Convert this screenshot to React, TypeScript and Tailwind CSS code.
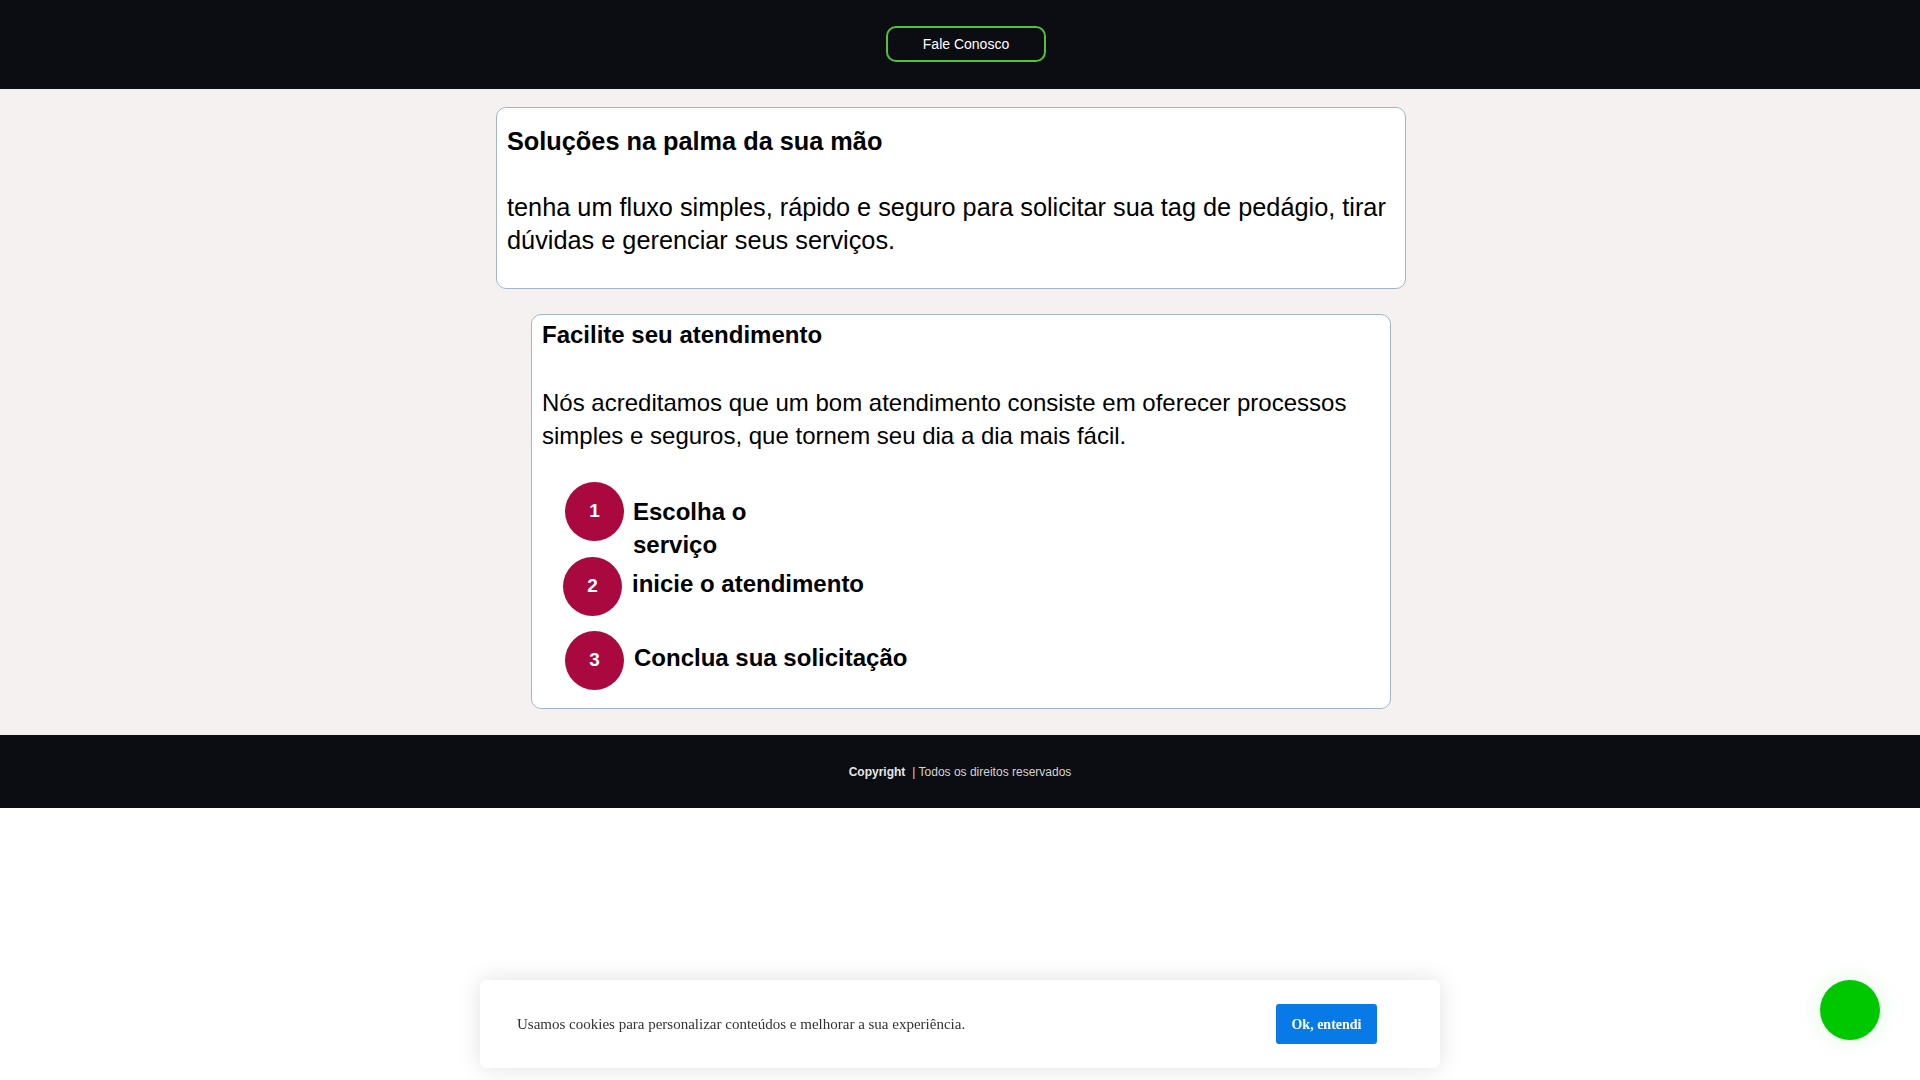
/**
 * App - página de atendimento (tag de pedágio)
 */

const steps = [
  { n: 1, label: 'Escolha o serviço' },
  { n: 2, label: 'inicie o atendimento' },
  { n: 3, label: 'Conclua sua solicitação' },
];

function StepBadge({ n, className = '' }: { n: number; className?: string }) {
  return (
    <div
      className={`w-[59px] h-[59px] shrink-0 rounded-full bg-[#a9093f] text-white text-[19px] font-bold flex items-center justify-center ${className}`}
    >
      {n}
    </div>
  );
}

export default function App() {
  return (
    <div className="min-h-screen bg-white text-black font-['Liberation_Sans',Arial,sans-serif]">
      {/* Header */}
      <header className="h-[89px] bg-[#0b0d12] flex justify-center pt-[26px]">
        <button className="ml-[12px] w-[160px] h-[36px] rounded-[10px] border-2 border-[#4fc33a] text-white text-[14px]">
          Fale Conosco
        </button>
      </header>

      {/* Main */}
      <main className="h-[646px] bg-[#f4f1f0] flex flex-col items-center pt-[18px]">
        <section className="w-[910px] mr-[18px] bg-white border border-[#a3b5c8] rounded-[10px] px-[10px] pt-[19px] pb-[31px]">
          <h2 className="text-[25.3px] leading-[28px] font-bold">Soluções na palma da sua mão</h2>
          <p className="mt-[36px] text-[25.3px] leading-[33px]">
            tenha um fluxo simples, rápido e seguro para solicitar sua tag de pedágio, tirar dúvidas e gerenciar
            seus serviços.
          </p>
        </section>

        <section className="w-[860px] ml-[2px] mt-[25px] bg-white border border-[#a3b5c8] rounded-[10px] px-[10px] pt-[6px] pb-[18px]">
          <h2 className="text-[24px] leading-[28px] font-bold">Facilite seu atendimento</h2>
          <p className="mt-[37px] text-[24px] leading-[33px] pr-[20px]">
            Nós acreditamos que um bom atendimento consiste em oferecer processos simples e seguros, que tornem seu
            dia a dia mais fácil.
          </p>

          <div className="mt-[30px] flex flex-col gap-[14px]">
            {/* Step 1 */}
            <div className="h-[60px] flex items-start ml-[23px]">
              <StepBadge n={steps[0].n} />
              <span className="ml-[9px] mt-[13px] w-[150px] text-[24px] leading-[33px] font-bold">
                {steps[0].label}
              </span>
            </div>
            {/* Step 2 */}
            <div className="h-[60px] flex items-center ml-[21px]">
              <StepBadge n={steps[1].n} />
              <span className="ml-[10px] mb-[5px] text-[24px] leading-[33px] font-bold">{steps[1].label}</span>
            </div>
            {/* Step 3 */}
            <div className="h-[60px] flex items-center ml-[23px]">
              <StepBadge n={steps[2].n} />
              <span className="ml-[10px] mb-[5px] text-[24px] leading-[33px] font-bold">{steps[2].label}</span>
            </div>
          </div>
        </section>
      </main>

      {/* Footer */}
      <footer className="h-[73px] bg-[#0b0d12] flex items-center justify-center text-[12px] text-[#d4d4d4]">
        <strong className="text-[#e6e6e6]">Copyright</strong>
        <span className="ml-[7px]">| Todos os direitos reservados</span>
      </footer>

      {/* Cookie banner */}
      <div className="fixed bottom-[12px] left-1/2 -translate-x-1/2 w-[960px] h-[88px] bg-white rounded-[6px] shadow-[0_0_24px_rgba(0,0,0,0.12)] flex items-center justify-between pl-[37px] pr-[63px] font-['Liberation_Serif','Times_New_Roman',serif]">
        <span className="text-[15px] text-[#333]">
          Usamos cookies para personalizar conteúdos e melhorar a sua experiência.
        </span>
        <button className="w-[101px] h-[40px] rounded-[3px] bg-[#087ae8] text-white text-[14px] font-bold">
          Ok, entendi
        </button>
      </div>

      {/* WhatsApp-like floating button */}
      <div className="fixed right-[40px] bottom-[40px] w-[60px] h-[60px] rounded-full bg-[#00c800] shadow-[0_0_24px_rgba(0,200,0,0.12)]" />
    </div>
  );
}
